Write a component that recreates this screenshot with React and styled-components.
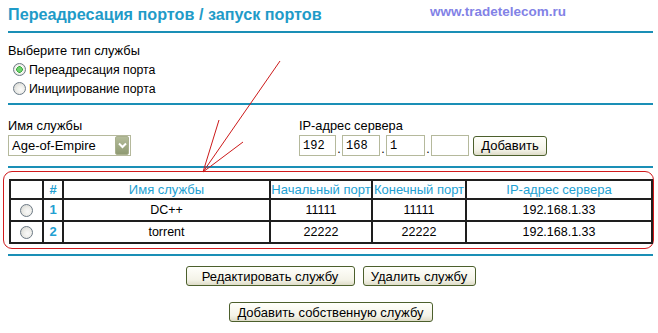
import React from "react";
import styled, { createGlobalStyle } from "styled-components";

const GlobalStyle = createGlobalStyle`
  body {
    margin: 0;
    background: #fff;
    font-family: "Liberation Sans", Arial, sans-serif;
    font-size: 12.3px;
    color: #000;
  }
`;

const Page = styled.div`
  position: relative;
  width: 645px;
  height: 333px;
  padding: 0 5px 0 8px;
  overflow: hidden;
`;

const Header = styled.header`
  display: flex;
  align-items: flex-start;
  justify-content: space-between;
  height: 26px;
  padding: 5px 87px 0 0;
`;

const Title = styled.h1`
  margin: 0;
  font-size: 16.2px;
  font-weight: bold;
  color: #1f9bc8;
`;

const Site = styled.span`
  margin-top: -1px;
  font-size: 13.5px;
  font-weight: bold;
  color: #8282e6;
`;

const Rule = styled.div`
  height: 2px;
  background: #1a8fb6;
`;

const TypeSection = styled.section`
  padding: 11px 0 5px;
`;

const Label = styled.div`
  line-height: 14px;
  margin-bottom: 2px;
  font-size: 12.8px;
`;

const Option = styled.label`
  display: flex;
  align-items: center;
  gap: 3px;
  height: 19px;
  padding-left: 5px;
`;

const Radio = styled.span`
  display: inline-block;
  box-sizing: border-box;
  width: ${p => p.size || 13}px;
  height: ${p => p.size || 13}px;
  border-radius: 50%;
  border: 1px solid #6d7a86;
  background: ${p =>
    p.checked
      ? "radial-gradient(circle, #6fd36f 0 2px, #34a234 3px, #fff 3.5px, #f4f4f0 4px, #d5d5cc 100%)"
      : "radial-gradient(circle at 60% 60%, #fafafa 0, #eeeeea 40%, #cfd0cc 100%)"};
`;

const ServiceSection = styled.section`
  display: flex;
  padding: 14px 0 10px;
`;

const Field = styled.div`
  width: ${p => p.width || "auto"};
`;

const Controls = styled.div`
  display: flex;
  align-items: center;
  height: 21px;
`;

const Select = styled.div`
  box-sizing: border-box;
  width: 123px;
  height: 21px;
  display: flex;
  align-items: center;
  padding-left: 3px;
  border: 1px solid #b5b99c;
  font-size: 13px;
`;

const DropButton = styled.span`
  box-sizing: border-box;
  margin-left: auto;
  margin-right: 1px;
  width: 14px;
  height: 19px;
  display: flex;
  align-items: center;
  justify-content: center;
  border: 1px solid #a9b08e;
  border-radius: 2px;
  background: linear-gradient(#b4bc9a, #8f9a72);
`;

const IpBox = styled.input`
  box-sizing: border-box;
  width: ${p => p.width || 38}px;
  height: 21px;
  padding: 0 3px;
  border: 1px solid #b5b99c;
  font-family: "Liberation Mono", "Courier New", monospace;
  font-size: 12px;
  color: #000;
  outline: none;
`;

const Dot = styled.span`
  width: 6px;
  align-self: flex-end;
  text-align: center;
  line-height: 14px;
`;

const Button = styled.button`
  box-sizing: border-box;
  width: ${p => p.width}px;
  height: 20px;
  margin-left: ${p => p.offset || 0}px;
  padding: 0;
  border: 1px solid #4c5f2c;
  border-radius: 3px;
  background: linear-gradient(#fffffb, #f4f3e8 70%, #dedcc8);
  font-family: "Liberation Sans", Arial, sans-serif;
  font-size: 13px;
  color: #000;
`;

const Frame = styled.div`
  margin: 3px -1px 5px -5px;
  padding: 7px 1px 4px 5px;
  border: 1px solid #d0191c;
  border-radius: 9px;
`;

const Table = styled.table`
  width: 642px;
  border-collapse: collapse;
  table-layout: fixed;
`;

const Th = styled.th`
  height: 17px;
  padding: 0;
  border: 2px solid #1e1e1e;
  font-weight: ${p => (p.bold ? "bold" : "normal")};
  font-size: 13px;
  color: #22a0d2;
`;

const Td = styled.td`
  height: 20px;
  padding: 0;
  border: 2px solid #1e1e1e;
  text-align: center;
  vertical-align: middle;
  font-weight: ${p => (p.bold ? "bold" : "normal")};
  color: ${p => (p.bold ? "#22a0d2" : "#000")};
  font-size: ${p => (p.bold ? 13 : 12.5)}px;
  line-height: 14px;
`;

const Actions = styled.div`
  display: flex;
  flex-direction: column;
  align-items: center;
  gap: 16px;
  padding-top: 10px;
`;

const ActionRow = styled.div`
  display: flex;
  gap: 8px;
`;

const Arrow = styled.svg`
  position: absolute;
  left: 0;
  top: 0;
  pointer-events: none;
`;

const rows = [
  { id: 1, name: "DC++", start: "11111", end: "11111", ip: "192.168.1.33" },
  { id: 2, name: "torrent", start: "22222", end: "22222", ip: "192.168.1.33" },
];

export default function App() {
  return (
    <>
      <GlobalStyle />
      <Page>
        <Header>
          <Title>Переадресация портов / запуск портов</Title>
          <Site>www.tradetelecom.ru</Site>
        </Header>
        <Rule />

        <TypeSection>
          <Label>Выберите тип службы</Label>
          <Option>
            <Radio checked />
            Переадресация порта
          </Option>
          <Option>
            <Radio />
            Инициирование порта
          </Option>
        </TypeSection>
        <Rule />

        <ServiceSection>
          <Field width="291px">
            <Label>Имя службы</Label>
            <Controls>
              <Select>
                Age-of-Empire
                <DropButton>
                  <svg width="9" height="7" viewBox="0 0 9 7">
                    <path d="M1 1.5 L4.5 5 L8 1.5" fill="none" stroke="#fff" strokeWidth="2" />
                  </svg>
                </DropButton>
              </Select>
            </Controls>
          </Field>
          <Field>
            <Label>IP-адрес сервера</Label>
            <Controls>
              <IpBox width={37} defaultValue="192" readOnly />
              <Dot>.</Dot>
              <IpBox width={38} defaultValue="168" readOnly />
              <Dot>.</Dot>
              <IpBox width={39} defaultValue="1" readOnly />
              <Dot>.</Dot>
              <IpBox width={38} defaultValue="" readOnly />
              <Button width={74} offset={4}>Добавить</Button>
            </Controls>
          </Field>
        </ServiceSection>
        <Rule />

        <Frame>
          <Table>
            <colgroup>
              <col style={{ width: 33 }} />
              <col style={{ width: 20 }} />
              <col style={{ width: 207 }} />
              <col style={{ width: 102 }} />
              <col style={{ width: 94 }} />
              <col style={{ width: 186 }} />
            </colgroup>
            <thead>
              <tr>
                <Th />
                <Th bold>#</Th>
                <Th>Имя службы</Th>
                <Th>Начальный порт</Th>
                <Th>Конечный порт</Th>
                <Th>IP-адрес сервера</Th>
              </tr>
            </thead>
            <tbody>
              {rows.map(r => (
                <tr key={r.id}>
                  <Td>
                    <Radio size={13} style={{ verticalAlign: "middle" }} />
                  </Td>
                  <Td bold>{r.id}</Td>
                  <Td>{r.name}</Td>
                  <Td>{r.start}</Td>
                  <Td>{r.end}</Td>
                  <Td>{r.ip}</Td>
                </tr>
              ))}
            </tbody>
          </Table>
        </Frame>
        <Rule />

        <Actions>
          <ActionRow>
            <Button width={169}>Редактировать службу</Button>
            <Button width={113}>Удалить службу</Button>
          </ActionRow>
          <Button width={204}>Добавить собственную службу</Button>
        </Actions>

        <Arrow width="658" height="333" viewBox="0 0 658 333">
          <g stroke="#cc1a1a" strokeWidth="1" fill="none">
            <line x1="280" y1="61" x2="203" y2="172" />
            <line x1="203" y1="172" x2="219" y2="120" />
            <line x1="203" y1="172" x2="243" y2="142" />
          </g>
        </Arrow>
      </Page>
    </>
  );
}
